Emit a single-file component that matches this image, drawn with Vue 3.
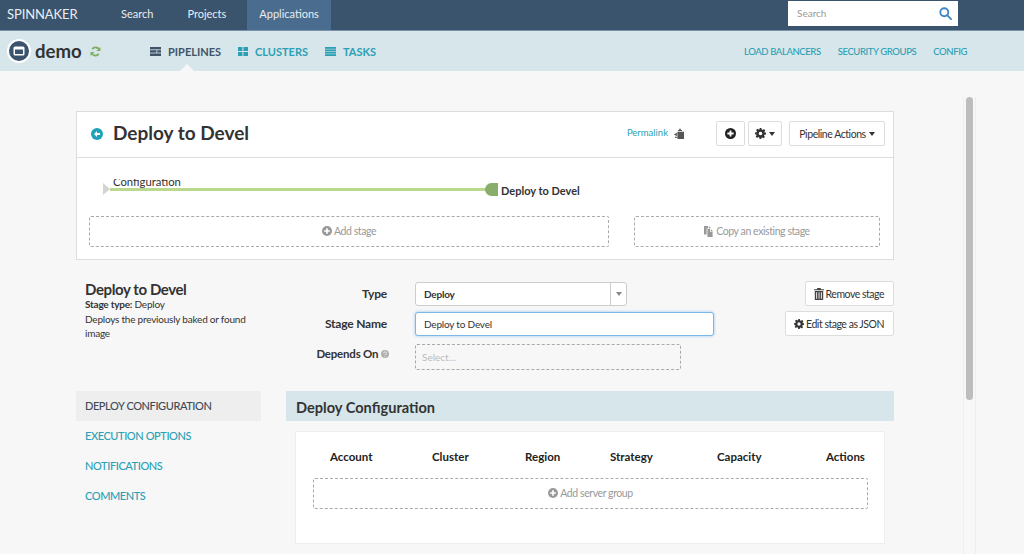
<template>
  <div class="app">
    <header class="topbar">
      <div class="brand">SPINNAKER</div>
      <nav class="main-nav">
        <a class="main-link">Search</a>
        <a class="main-link">Projects</a>
        <a class="main-link active">Applications</a>
      </nav>
      <div class="global-search">
        <span>Search</span>
        <svg width="13" height="13" viewBox="0 0 14 14" fill="none" stroke="#3f88c5" stroke-width="2">
          <circle cx="5.7" cy="5.7" r="4.3" />
          <path d="M8.8 8.8l4.2 4.2" stroke-linecap="round" />
        </svg>
      </div>
    </header>

    <div class="subnav">
      <div class="app-logo">
        <svg width="24" height="24" viewBox="0 0 24 24">
          <circle cx="12" cy="12" r="11" fill="#3a546d" stroke="#fff" stroke-width="2" />
          <rect x="6.5" y="7.5" width="11" height="9" rx="1.5" fill="#fff" />
          <rect x="8" y="10.5" width="8" height="4.5" fill="#3a546d" />
        </svg>
        <span class="app-name">demo</span>
        <svg class="refresh" width="11" height="11" viewBox="0 0 12 12" fill="none" stroke="#7fae63" stroke-width="2">
          <path d="M10.4 4.6A4.6 4.6 0 0 0 2.4 3.4" />
          <path d="M1.6 7.4a4.6 4.6 0 0 0 8 1.2" />
          <path d="M11.4 1v4.4H7z" fill="#7fae63" stroke="none" />
          <path d="M.6 11V6.6H5z" fill="#7fae63" stroke="none" />
        </svg>
      </div>
      <nav class="sections">
        <a class="section current">
          <svg width="11" height="9" viewBox="0 0 11 9" fill="#3f5468">
            <rect width="11" height="2.4" /><rect y="3.2" width="6.5" height="2.4" /><rect x="7.3" y="3.2" width="3.7" height="2.4" /><rect y="6.4" width="11" height="2.6" />
          </svg>
          PIPELINES
        </a>
        <a class="section">
          <svg width="10" height="9" viewBox="0 0 10 9" fill="#2b9fb5">
            <rect width="4.4" height="4" /><rect x="5.4" width="4.6" height="4" /><rect y="5" width="4.4" height="4" /><rect x="5.4" y="5" width="4.6" height="4" />
          </svg>
          CLUSTERS
        </a>
        <a class="section">
          <svg width="11" height="9" viewBox="0 0 11 9" fill="#2b9fb5">
            <rect width="11" height="1.8" /><rect y="2.4" width="11" height="1.8" /><rect y="4.8" width="11" height="1.8" /><rect y="7.2" width="11" height="1.8" />
          </svg>
          TASKS
        </a>
      </nav>
      <nav class="extras">
        <a>LOAD BALANCERS</a>
        <a>SECURITY GROUPS</a>
        <a>CONFIG</a>
      </nav>
      <span class="caret-up"></span>
    </div>

    <main class="content">
      <section class="pipeline-card">
        <div class="card-head">
          <svg class="back" width="12" height="12" viewBox="0 0 12 12">
            <circle cx="6" cy="6" r="6" fill="#1fa1ba" />
            <path d="M6 3L3 6l3 3V7.1h3V4.9H6z" fill="#fff" />
          </svg>
          <h1>Deploy to Devel</h1>
          <a class="permalink">Permalink</a>
          <svg class="clip" width="10" height="11" viewBox="0 0 10 11" fill="#555">
            <path d="M4 2h1.2V.8h1.6V2H8v1H4zM3.4 3.8H10V11H3.4z" />
            <path d="M0 6.4L2.8 4.6v3.6zM1 8.8h1.8V10H1z" />
          </svg>
          <button class="btn icon-btn">
            <svg width="11" height="11" viewBox="0 0 12 12">
              <circle cx="6" cy="6" r="6" fill="#222" />
              <path d="M5 2.6h2V5h2.4v2H7v2.4H5V7H2.6V5H5z" fill="#fff" />
            </svg>
          </button>
          <button class="btn gear-btn">
            <svg width="11" height="11" viewBox="0 0 24 24" fill="#333">
              <path fill-rule="evenodd" d="M10 0h4l.7 3.4 2.1.9 2.9-1.9 2.8 2.8-1.9 2.9.9 2.1L24 10v4l-3.4.7-.9 2.1 1.9 2.9-2.8 2.8-2.9-1.9-2.1.9L14 24h-4l-.7-3.4-2.1-.9-2.9 1.9-2.8-2.8 1.9-2.9-.9-2.1L0 14v-4l3.4-.7.9-2.1-1.9-2.9 2.8-2.8 2.9 1.9 2.1-.9zM12 8a4 4 0 1 0 0 8 4 4 0 0 0 0-8z" />
            </svg>
            <span class="caret"></span>
          </button>
          <button class="btn actions-btn">Pipeline Actions <span class="caret"></span></button>
        </div>
        <div class="graph">
          <span class="graph-label first">Configuration</span>
          <span class="edge"></span>
          <span class="start-node"></span>
          <span class="end-node"></span>
          <span class="graph-label last">Deploy to Devel</span>
        </div>
        <div class="add-row">
          <div class="dashed add-stage">
            <svg width="10" height="10" viewBox="0 0 12 12">
              <circle cx="6" cy="6" r="6" fill="#999" />
              <path d="M5 2.6h2V5h2.4v2H7v2.4H5V7H2.6V5H5z" fill="#fff" />
            </svg>
            Add stage
          </div>
          <div class="dashed copy-stage">
            <svg width="10" height="11" viewBox="0 0 10 11" fill="#999">
              <path d="M0 0h4v2.5H2.6v6H0zM3.4 3H6v2.8h2.6V11H3.4zM6.8 3L9 5.2H6.8zM4.8 0L6.4 1.6V2.4H4.8z" />
            </svg>
            Copy an existing stage
          </div>
        </div>
      </section>

      <section class="stage-form">
        <div class="stage-info">
          <h2>Deploy to Devel</h2>
          <p><b>Stage type:</b> Deploy</p>
          <p>Deploys the previously baked or found image</p>
        </div>
        <div class="fields">
          <div class="field">
            <label>Type</label>
            <div class="select">
              <span>Deploy</span>
              <i><span class="mini-caret"></span></i>
            </div>
          </div>
          <div class="field">
            <label>Stage Name</label>
            <div class="text-input">Deploy to Devel</div>
          </div>
          <div class="field depends-row">
            <label class="depends">Depends On
              <svg width="8" height="8" viewBox="0 0 8 8">
                <circle cx="4" cy="4" r="4" fill="#b0b0b0" />
                <path d="M2.6 3.2a1.4 1.3 0 1 1 2 1.1c-.4.2-.6.4-.6.8M4 5.8v.9" fill="none" stroke="#f7f7f7" stroke-width=".8" />
              </svg>
            </label>
            <div class="dashed depends-input">Select...</div>
          </div>
        </div>
        <div class="stage-actions">
          <button class="btn">
            <svg width="10" height="12" viewBox="0 0 10 12" fill="#444">
              <path d="M3.4 0h3.2l.5 1.2H10v1H0v-1h2.9zM.8 3h8.4v9H.8zM2.2 4.2v6.6h.9V4.2zm2.4 0v6.6h.9V4.2zm2.3 0v6.6h.9V4.2z" fill-rule="evenodd" />
            </svg>
            Remove stage
          </button>
          <button class="btn">
            <svg width="10" height="10" viewBox="0 0 24 24" fill="#333">
              <path fill-rule="evenodd" d="M10 0h4l.7 3.4 2.1.9 2.9-1.9 2.8 2.8-1.9 2.9.9 2.1L24 10v4l-3.4.7-.9 2.1 1.9 2.9-2.8 2.8-2.9-1.9-2.1.9L14 24h-4l-.7-3.4-2.1-.9-2.9 1.9-2.8-2.8 1.9-2.9-.9-2.1L0 14v-4l3.4-.7.9-2.1-1.9-2.9 2.8-2.8 2.9 1.9 2.1-.9zM12 8a4 4 0 1 0 0 8 4 4 0 0 0 0-8z" />
            </svg>
            Edit stage as JSON
          </button>
        </div>
      </section>

      <section class="config">
        <aside class="config-nav">
          <a class="selected">DEPLOY CONFIGURATION</a>
          <a>EXECUTION OPTIONS</a>
          <a>NOTIFICATIONS</a>
          <a>COMMENTS</a>
        </aside>
        <div class="config-main">
          <h3>Deploy Configuration</h3>
          <div class="config-card">
            <div class="columns">
              <span v-for="col in columns" :key="col">{{ col }}</span>
            </div>
            <div class="dashed add-group">
              <svg width="10" height="10" viewBox="0 0 12 12">
                <circle cx="6" cy="6" r="6" fill="#999" />
                <path d="M5 2.6h2V5h2.4v2H7v2.4H5V7H2.6V5H5z" fill="#fff" />
              </svg>
              Add server group
            </div>
          </div>
        </div>
      </section>
    </main>

    <div class="scrollbar"><span></span></div>
  </div>
</template>

<script setup>
const columns = ['Account', 'Cluster', 'Region', 'Strategy', 'Capacity', 'Actions']
</script>

<style>
html, body {
  margin: 0;
  overflow: hidden;
}
</style>

<style scoped>
.app {
  position: relative;
  width: 1024px;
  height: 554px;
  overflow: hidden;
  background: #f7f7f7;
  font-family: Lato, "Liberation Sans", sans-serif;
  font-size: 11px;
  color: #333;
}

.topbar {
  display: flex;
  align-items: center;
  height: 30px;
  padding-left: 7px;
  background: #3a546d;
  border-bottom: 1px solid #7b93a8;
  color: #e8eef2;
}

.brand {
  width: 101px;
  padding-bottom: 2px;
  font-size: 13px;
  letter-spacing: -0.1px;
}

.main-nav {
  display: flex;
  height: 30px;
}

.main-link {
  display: flex;
  align-items: center;
  box-sizing: border-box;
  height: 30px;
  padding: 0 13px 3px;
  margin-right: 8px;
  font-size: 11px;
}

.main-link.active {
  padding: 0 12px 3px;
  background: #4a6d8f;
}

.global-search {
  display: flex;
  align-items: center;
  justify-content: space-between;
  box-sizing: border-box;
  width: 170px;
  height: 25px;
  margin-left: auto;
  margin-right: 66px;
  margin-top: -3px;
  padding: 0 6px 1px 9px;
  background: #fff;
  color: #999;
  font-size: 10px;
}

.subnav {
  position: relative;
  display: flex;
  align-items: center;
  height: 40px;
  padding-left: 7px;
  background: #d6e6ea;
}

.app-logo {
  display: flex;
  align-items: center;
  width: 143px;
}

.app-name {
  margin-left: 4px;
  font-size: 18.6px;
  font-weight: 700;
  color: #333;
}

.refresh {
  margin-left: 8px;
}

.sections {
  display: flex;
  gap: 17px;
}

.section {
  display: flex;
  align-items: center;
  gap: 7px;
  font-size: 11px;
  font-weight: 700;
  color: #2b9fb5;
}

.section.current {
  color: #3f5468;
}

.extras {
  display: flex;
  gap: 17px;
  margin-left: auto;
  margin-right: 57px;
  font-size: 9.5px;
  font-weight: 500;
  letter-spacing: -0.4px;
  color: #2b9fb5;
}

.caret-up {
  position: absolute;
  left: 180px;
  bottom: 0;
  border-left: 7px solid transparent;
  border-right: 7px solid transparent;
  border-bottom: 7px solid #f7f7f7;
}

.content {
  width: 818px;
  margin-left: 76px;
  padding-top: 40px;
}

.pipeline-card {
  box-sizing: border-box;
  height: 149px;
  background: #fff;
  border: 1px solid #ddd;
}

.card-head {
  display: flex;
  align-items: center;
  height: 43px;
  padding: 0 8px 2px 14px;
  border-bottom: 1px solid #ddd;
}

.back {
  margin-right: 10px;
}

h1 {
  margin: -2px 0 0;
  font-size: 19px;
  font-weight: 700;
  color: #333;
}

.permalink {
  margin-left: auto;
  padding-bottom: 2px;
  font-size: 9.5px;
  color: #2b9fb5;
}

.clip {
  margin: 0 32px 0 6px;
}

.btn {
  display: inline-flex;
  align-items: center;
  justify-content: center;
  gap: 3px;
  box-sizing: border-box;
  height: 25px;
  padding: 0;
  background: #fff;
  border: 1px solid #ddd;
  border-radius: 2px;
  font-family: inherit;
  font-size: 10.5px;
  letter-spacing: -0.45px;
  color: #333;
}

.icon-btn {
  width: 29px;
  margin-right: 3px;
}

.gear-btn {
  width: 34px;
  margin-right: 7px;
}

.actions-btn {
  width: 96px;
}

.caret {
  display: inline-block;
  border-left: 3.5px solid transparent;
  border-right: 3.5px solid transparent;
  border-top: 4px solid #333;
}

.graph {
  position: relative;
  height: 58px;
  overflow: hidden;
}

.graph-label {
  position: absolute;
  font-size: 11px;
  line-height: 14px;
}

.graph-label.first {
  left: 36px;
  top: 21px;
  height: 10px;
  overflow: hidden;
  font-size: 11.3px;
  line-height: 6px;
}

.graph-label.last {
  left: 424px;
  top: 26px;
  font-weight: 700;
}

.edge {
  position: absolute;
  left: 33px;
  top: 30px;
  width: 378px;
  height: 3px;
  background: #b9d98f;
}

.start-node {
  position: absolute;
  left: 26px;
  top: 25px;
  border-top: 6.5px solid transparent;
  border-bottom: 6.5px solid transparent;
  border-left: 7px solid #d4d4d4;
}

.end-node {
  position: absolute;
  left: 408px;
  top: 25px;
  width: 13px;
  height: 13px;
  background: #8aad6b;
  border-radius: 6.5px 0 0 6.5px;
}

.add-row {
  display: flex;
  gap: 25px;
  padding: 0 13px 0 12px;
}

.dashed {
  box-sizing: border-box;
  border: 1px dashed #aaa;
  border-radius: 2px;
}

.add-stage,
.copy-stage,
.add-group {
  display: flex;
  align-items: center;
  justify-content: center;
  gap: 2px;
  height: 31px;
  padding-bottom: 1px;
  font-size: 10.5px;
  letter-spacing: -0.42px;
  color: #999;
}

.add-stage {
  width: 520px;
}

.copy-stage {
  flex: 1;
}

.stage-form {
  display: flex;
  height: 110px;
  padding-top: 21px;
}

.stage-info {
  box-sizing: border-box;
  width: 190px;
  padding-left: 9px;
  padding-right: 5px;
  font-size: 10px;
  line-height: 14.5px;
  letter-spacing: -0.22px;
}

.stage-info h2 {
  margin: 0;
  font-size: 15px;
  font-weight: 700;
  line-height: 16px;
  letter-spacing: -0.4px;
}

.stage-info p {
  margin: 0;
}

.fields {
  width: 448px;
  padding-top: 1px;
}

.field {
  display: flex;
  align-items: flex-start;
  margin-bottom: 6px;
}

.depends-row {
  margin-top: 8px;
}

.field label {
  width: 121px;
  margin-right: 28px;
  line-height: 24px;
  text-align: right;
  font-size: 12px;
  font-weight: 700;
  letter-spacing: -0.2px;
}

.field label.depends {
  width: 123px;
  margin-right: 26px;
  font-size: 11.5px;
  line-height: 20px;
}

.select,
.text-input {
  display: flex;
  align-items: center;
  box-sizing: border-box;
  height: 24px;
  background: #fff;
  border: 1px solid #ccc;
  border-radius: 3px;
  padding-left: 8px;
  font-size: 10px;
  letter-spacing: -0.2px;
}

.select {
  justify-content: space-between;
  width: 212px;
  padding-right: 0;
  font-weight: 700;
}

.select i {
  display: flex;
  align-items: center;
  justify-content: center;
  width: 15px;
  height: 100%;
  border-left: 1px solid #ccc;
}

.mini-caret {
  border-left: 3px solid transparent;
  border-right: 3px solid transparent;
  border-top: 4px solid #888;
}

.text-input {
  width: 299px;
  border-color: #7cb7e6;
  box-shadow: 0 0 3px rgba(102, 175, 233, 0.7);
}

.depends-input {
  display: flex;
  align-items: center;
  width: 266px;
  height: 26px;
  padding-left: 6px;
  font-size: 10px;
  color: #bbb;
}

.stage-actions {
  display: flex;
  flex: 1;
  flex-direction: column;
  align-items: flex-end;
  gap: 5px;
}

.stage-actions .btn {
  gap: 2px;
  padding: 0 9px 0 8px;
  letter-spacing: -0.48px;
}

.config {
  display: flex;
  gap: 25px;
}

.config-nav {
  display: flex;
  flex-direction: column;
  width: 185px;
}

.config-nav a {
  height: 30px;
  padding-left: 9px;
  line-height: 30px;
  font-size: 11px;
  font-weight: 500;
  letter-spacing: -0.42px;
  color: #2b9fb5;
}

.config-nav a.selected {
  background: #eeeeee;
  color: #3f4a55;
}

.config-main {
  flex: 1;
}

h3 {
  height: 30px;
  margin: 0;
  padding-left: 10px;
  background: #d6e6ea;
  font-size: 14.6px;
  font-weight: 700;
  line-height: 33px;
  color: #333;
}

.config-card {
  box-sizing: border-box;
  width: 590px;
  height: 113px;
  margin: 10px 0 0 9px;
  padding: 17px 17px 0 17px;
  background: #fff;
  border: 1px solid #eee;
}

.columns {
  display: grid;
  grid-template-columns: 102px 93px 85px 107px 109px 58px;
  padding-left: 17px;
  font-size: 11.5px;
  font-weight: 700;
  line-height: 16px;
  color: #222;
}

.add-group {
  width: 555px;
  margin-top: 13px;
}

.scrollbar {
  position: absolute;
  left: 963px;
  top: 97px;
  bottom: 0;
  width: 13px;
  background: #f7f7f7;
  border-left: 1px solid #eee;
  border-right: 1px solid #eee;
  box-sizing: border-box;
}

.scrollbar span {
  position: absolute;
  left: 2px;
  top: 0;
  width: 7px;
  height: 303px;
  background: #bdbdbd;
  border-radius: 4px;
}
</style>
